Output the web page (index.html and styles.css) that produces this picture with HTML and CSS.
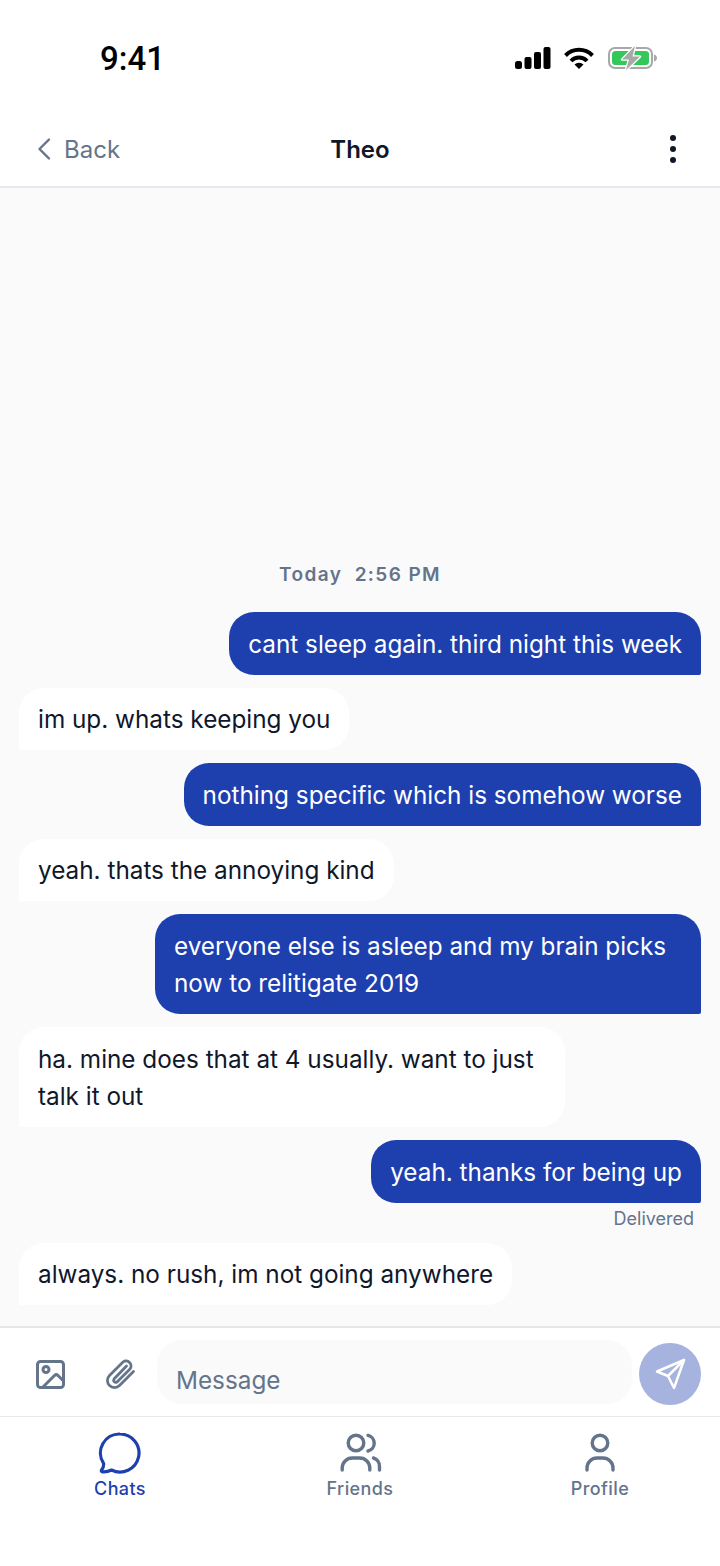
FILE: index.html
```html
<!DOCTYPE html>
<html lang="en">
<head>
  <meta charset="UTF-8">
  <meta name="viewport" content="width=device-width, initial-scale=1.0">
  <title>Theo</title>
  <link rel="stylesheet" href="styles.css">
</head>
<body>
  <div class="status-bar">
    <span class="clock">9:41</span>
    <div class="status-icons">
      <svg width="36" height="22" viewBox="0 0 36 22"><rect x="0" y="14" width="7" height="8" rx="2.5"/><rect x="9.5" y="10" width="7" height="12" rx="2"/><rect x="19" y="5" width="7" height="17" rx="2"/><rect x="28.5" y="0" width="7" height="22" rx="2"/></svg>
      <svg width="30" height="22" viewBox="0 0 30 22" fill="none" stroke="#000" stroke-width="4"><path d="M1.500 8.500a19 19 0 0 1 27 0"/><path d="M7 14a11 11 0 0 1 16 0"/><path d="M15 22l-4.500-4.500a6.400 6.400 0 0 1 9 0z" fill="#000" stroke="none"/></svg>
      <svg width="50" height="26" viewBox="0 0 50 26"><rect x="2" y="3" width="43" height="20" rx="6" fill="none" stroke="#a8a8a8" stroke-width="2"/><rect x="5" y="6" width="37" height="14" rx="3.500" fill="#34c759"/><path d="M47 9.500c2 .5 3 2 3 3.500s-1 3-3 3.500z" fill="#a8a8a8"/><path d="M28 1L15 14.500h7L19 25l14-13.500h-7.500z" fill="#a8a8a8" stroke="#fff" stroke-width="2.500" stroke-linejoin="round" paint-order="stroke"/></svg>
    </div>
  </div>

  <header class="nav">
    <div class="back">
      <svg width="16" height="24" viewBox="0 0 16 24" fill="none" stroke="#64748b" stroke-width="2.400" stroke-linecap="round" stroke-linejoin="round"><path d="M13 2.500L3.500 12l9.500 9.500"/></svg>
      <span>Back</span>
    </div>
    <h1 class="title">Theo</h1>
    <div class="more"><i></i><i></i><i></i></div>
  </header>

  <main class="chat">
    <div class="stamp">Today&nbsp; 2:56 PM</div>
    <div class="msg out">cant sleep again. third night this week</div>
    <div class="msg in">im up. whats keeping you</div>
    <div class="msg out">nothing specific which is somehow worse</div>
    <div class="msg in">yeah. thats the annoying kind</div>
    <div class="msg out">everyone else is asleep and my brain picks now to relitigate 2019</div>
    <div class="msg in">ha. mine does that at 4 usually. want to just talk it out</div>
    <div class="msg out">yeah. thanks for being up</div>
    <div class="delivered">Delivered</div>
    <div class="msg in">always. no rush, im not going anywhere</div>
  </main>

  <div class="composer">
    <svg class="tool" width="36" height="36" viewBox="0 0 36 36" fill="none" stroke="#64748b" stroke-width="3" stroke-linecap="round" stroke-linejoin="round"><rect x="4.500" y="4.500" width="26" height="26" rx="3"/><circle cx="13" cy="12.500" r="3"/><path d="M9.500 30.500L21.500 18.500a2.500 2.500 0 0 1 3.500 0l5.500 5.500"/></svg>
    <svg class="tool" width="36" height="36" viewBox="0 0 36 36" fill="none" stroke="#64748b" stroke-width="2.800" stroke-linecap="round" stroke-linejoin="round"><path d="M30.500 14.500L16.500 28.500a7 7 0 0 1-10-10L20 5a5 5 0 0 1 7 7L14 25a2.200 2.200 0 0 1-3-3L23.500 9"/></svg>
    <div class="input">Message</div>
    <button class="send">
      <svg width="34" height="34" viewBox="0 0 34 34" fill="none" stroke="#fff" stroke-width="2.500" stroke-linecap="round" stroke-linejoin="round"><path d="M31 3L4 14.500l11 4.500 6 12z"/><path d="M31 3L15 19"/></svg>
    </button>
  </div>

  <nav class="tabs">
    <div class="tab active">
      <svg width="44" height="42" viewBox="0 0 44 42" fill="none" stroke="#1e40af" stroke-width="3.200" stroke-linecap="round" stroke-linejoin="round"><path d="M22 2a19 19 0 1 1-8.500 36c-3 1.500-6 2-9 1.800-1 0-1.500-1-.9-1.800 1.500-2 2.300-4 2-6.500A19 19 0 0 1 22 2z"/></svg>
      <span>Chats</span>
    </div>
    <div class="tab">
      <svg width="44" height="42" viewBox="0 0 44 42" fill="none" stroke="#64748b" stroke-width="3.400" stroke-linecap="round" stroke-linejoin="round"><circle cx="18" cy="11" r="7.800"/><path d="M4.200 38V36a10 10 0 0 1 10-10h7.600a10 10 0 0 1 10 10v2"/><path d="M30 3.400a8 8 0 0 1 0 15.600"/><path d="M35.500 26a8.500 8.500 0 0 1 6 8.500V38"/></svg>
      <span>Friends</span>
    </div>
    <div class="tab">
      <svg width="44" height="42" viewBox="0 0 44 42" fill="none" stroke="#64748b" stroke-width="3.400" stroke-linecap="round" stroke-linejoin="round"><circle cx="22" cy="11" r="7.800"/><path d="M9 38V36a10 10 0 0 1 10-10h6a10 10 0 0 1 10 10v2"/></svg>
      <span>Profile</span>
    </div>
  </nav>
</body>
</html>
```

FILE: styles.css
```css
* {
  box-sizing: border-box;
}
body {
  margin: 0;
  width: 720px;
  height: 1566px;
  display: flex;
  flex-direction: column;
  background: #fff;
  font-family: Inter, 'Noto Sans', sans-serif;
  color: #0f172a;
  overflow: hidden;
}
.status-bar {
  height: 112px;
  flex-shrink: 0;
  display: flex;
  justify-content: space-between;
  align-items: flex-start;
  padding: 41px 63px 0 100px;
}
.clock {
  font-family: Roboto, Inter, sans-serif;
  font-size: 33px;
  line-height: 36px;
  font-weight: 500;
  color: #000;
}
.status-icons {
  display: flex;
  align-items: center;
  gap: 13px;
  margin-top: 4px;
}
.nav {
  height: 76px;
  flex-shrink: 0;
  display: flex;
  align-items: center;
  justify-content: space-between;
  padding: 0 44px 0 36px;
  border-bottom: 2px solid #e4e8f0;
  position: relative;
}
.back {
  display: flex;
  align-items: center;
  gap: 12px;
  color: #64748b;
  font-size: 24px;
}
.title {
  position: absolute;
  left: 0;
  right: 0;
  margin: 0;
  text-align: center;
  font-size: 24px;
  font-weight: 600;
  pointer-events: none;
}
.more {
  display: flex;
  flex-direction: column;
  gap: 5px;
}
.more i {
  width: 6px;
  height: 6px;
  border-radius: 50%;
  background: #0f172a;
}
.chat {
  flex: 1;
  min-height: 0;
  display: flex;
  flex-direction: column;
  justify-content: flex-end;
  gap: 13px;
  padding: 0 19px 21px;
  background: #fafafb;
}
.stamp {
  align-self: center;
  font-size: 19px;
  font-weight: 600;
  letter-spacing: 1.400px;
  color: #64748b;
  margin-bottom: 13px;
}
.msg {
  max-width: 546px;
  padding: 13.500px 19px 11.500px;
  font-size: 24.300px;
  line-height: 37.500px;
}
.out {
  align-self: flex-end;
  background: #1e40af;
  color: #fff;
  border-radius: 25px 25px 2px 25px;
}
.in {
  align-self: flex-start;
  background: #fff;
  color: #0f172a;
  border-radius: 25px 25px 25px 2px;
}
.delivered {
  align-self: flex-end;
  margin: -8px 7px 0 0;
  font-size: 18px;
  line-height: 22px;
  color: #64748b;
}
.composer {
  height: 91px;
  flex-shrink: 0;
  display: flex;
  align-items: center;
  padding: 0 19px 0 33px;
  border-top: 2px solid #e5e7eb;
  border-bottom: 1px solid #e8eaee;
}
.tool {
  flex-shrink: 0;
  margin: 6px 34px 0 0;
}
.tool + .tool {
  margin-right: 19px;
}
.input {
  flex: 1;
  height: 64px;
  padding: 24px 19px 0;
  margin-left: -1px;
  background: #fafafb;
  border-radius: 25px;
  color: #64748b;
  font-size: 24.300px;
  line-height: 32px;
}
.send {
  width: 62px;
  height: 62px;
  margin: 4px 0 0 7px;
  padding: 0;
  border: none;
  border-radius: 50%;
  background: #a5b3de;
  display: flex;
  align-items: center;
  justify-content: center;
}
.tabs {
  height: 149px;
  flex-shrink: 0;
  display: flex;
  padding-top: 15px;
}
.tab {
  flex: 1;
  display: flex;
  flex-direction: column;
  align-items: center;
  gap: 4px;
  color: #64748b;
  font-size: 18px;
  font-weight: 500;
  letter-spacing: 0.400px;
}
.tab.active {
  color: #1e40af;
}
```
